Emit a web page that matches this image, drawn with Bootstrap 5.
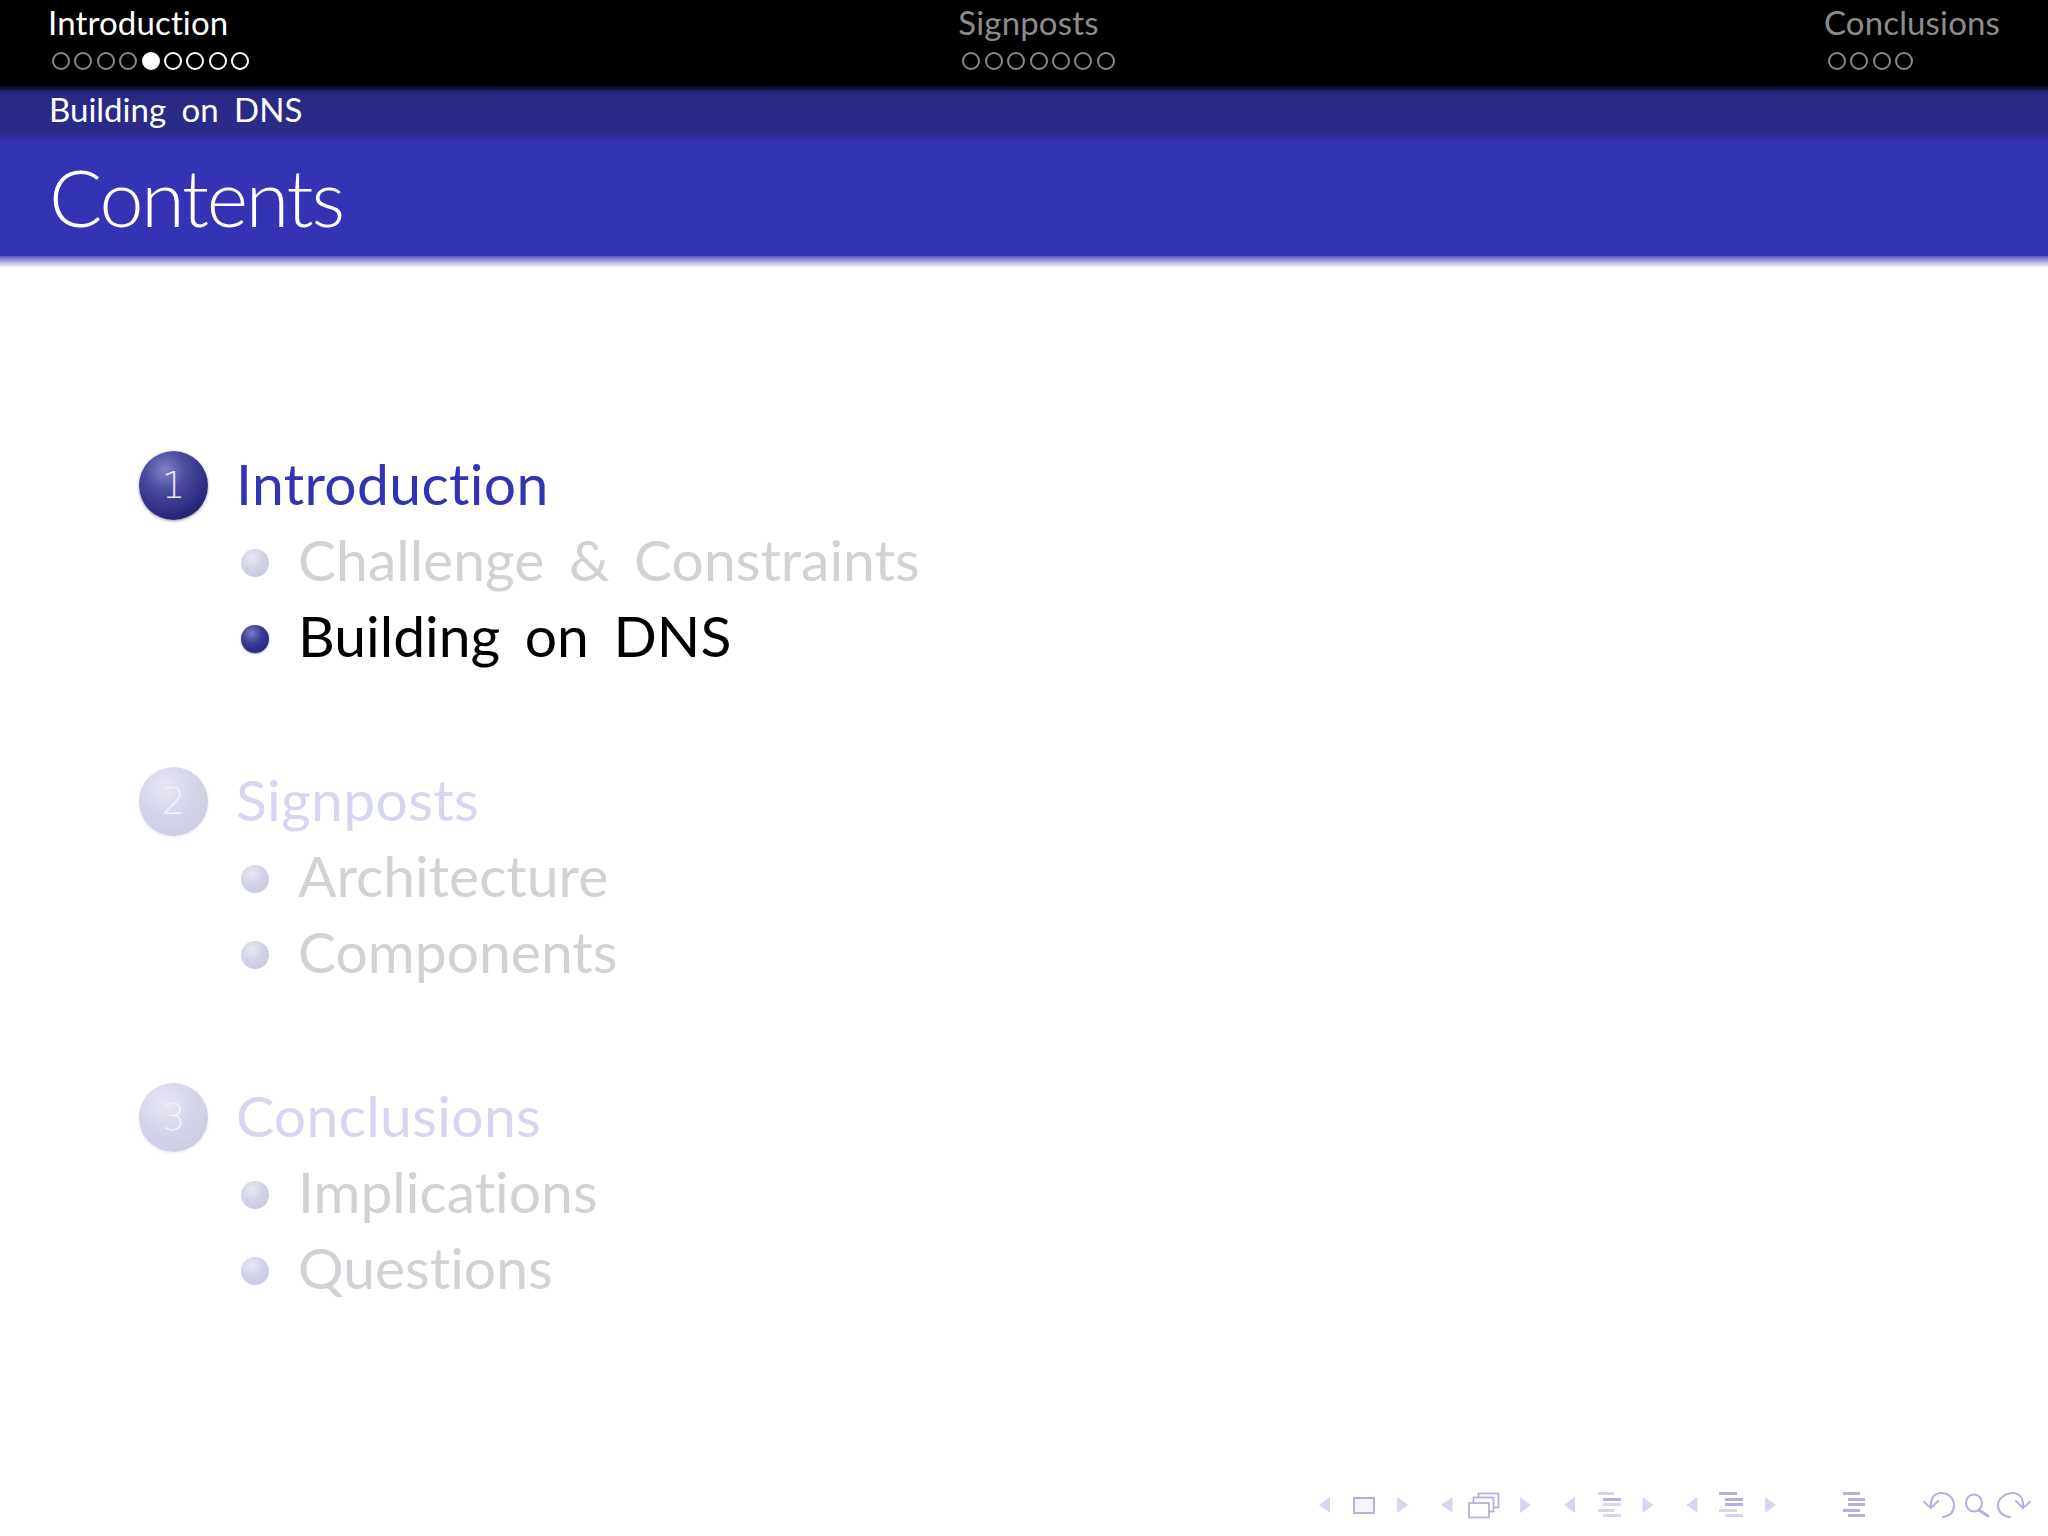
<!DOCTYPE html>
<html lang="en"><head><meta charset="utf-8"><title>Contents</title>
<link href="https://cdn.jsdelivr.net/npm/bootstrap@5.3.0/dist/css/bootstrap.min.css" rel="stylesheet">
<style>
html,body{margin:0;height:100%}
body{width:2048px;height:1536px;overflow:hidden;background:#fff;font-family:Lato,"Open Sans","Liberation Sans",sans-serif;font-weight:400;color:#000;font-variant-ligatures:none;font-kerning:normal}
.slide{width:2048px;height:1536px}
.topnav{height:85px;background:#000;padding:0 48px 0 48px}
.navname{font-size:33px;line-height:38px;padding-top:3px;color:#8c8c8c;white-space:nowrap;letter-spacing:.15px}
.navname.on{color:#fff}
.dots{gap:4.4px;margin:11px 0 0 4px}
.dotm{width:18px;height:18px;border:2px solid #8a8a8a;border-radius:50%}
.dotm.on{border-color:#fff}
.dotm.fill{background:#fff;border-color:#fff}
.subbar{height:58px;background:linear-gradient(#000 0,#25257c 7px,#2a2a85 14px,#2a2a88 47px,#3333b3 57px);padding:4px 49px 0;color:#fff;font-size:33px;line-height:40px;word-spacing:7px}
.titlebar{height:115px;background:#3333b3;color:#fff;font-size:79px;font-weight:300;letter-spacing:-2.2px;line-height:112px;padding:0 49px;margin-top:-2px}
.fadebar{height:12px;background:linear-gradient(#5a5ac2,#c5c5ea 60%,#fff)}
.toc{padding:178px 0 0 139px}
.tocsec{margin-bottom:88px}
.secrow{height:76px}
.ballbig{width:69px;height:69px;border-radius:50%;font-family:"DejaVu Sans",sans-serif;font-weight:200;font-size:37px;line-height:1;color:#e8e8f8;background:radial-gradient(circle at 38% 28%,#8282c8 0,#4a4a9e 32%,#2a2a80 68%,#181858 100%);box-shadow:0 1px 3px rgba(20,20,60,.45);margin:2px 28px 0 0}
.secname{font-size:57px;color:#3333b3;letter-spacing:.35px}
.subrow{height:76px;padding-left:102px}
.ballsm{width:28px;height:28px;border-radius:50%;background:radial-gradient(circle at 38% 30%,#7a7ac8 0,#3a3a9a 40%,#1c1c6c 100%);margin:6px 29px 0 0;box-shadow:0 1px 2px rgba(20,20,60,.4)}
.subname{font-size:57px;color:#000;word-spacing:10px}
.dim .ballbig{background:radial-gradient(circle at 38% 30%,#e6e6f3 0,#d5d5ea 45%,#c7c7e0 100%);box-shadow:0 1px 3px rgba(20,20,60,.1);color:#f0f0f8}
.dim .secname{color:#d6d6f0}
.dimsub .ballsm{background:radial-gradient(circle at 38% 30%,#e8e8f3 0,#d0d0e6 50%,#c4c4dc 100%);box-shadow:none}
.dimsub .subname{color:#d2d2d6}
.navfoot{margin-top:auto;align-self:flex-end;flex:none}
</style></head><body>
<div class="slide d-flex flex-column">
 <nav class="topnav d-flex justify-content-between">
  <div><div class="navname on">Introduction</div><div class="dots d-flex">
   <span class="dotm"></span><span class="dotm"></span><span class="dotm"></span><span class="dotm"></span><span class="dotm fill"></span><span class="dotm on"></span><span class="dotm on"></span><span class="dotm on"></span><span class="dotm on"></span></div></div>
  <div><div class="navname">Signposts</div><div class="dots d-flex">
   <span class="dotm"></span><span class="dotm"></span><span class="dotm"></span><span class="dotm"></span><span class="dotm"></span><span class="dotm"></span><span class="dotm"></span></div></div>
  <div><div class="navname">Conclusions</div><div class="dots d-flex">
   <span class="dotm"></span><span class="dotm"></span><span class="dotm"></span><span class="dotm"></span></div></div>
 </nav>
 <div class="subbar">Building on DNS</div>
 <div class="titlebar">Contents</div>
 <div class="fadebar"></div>
 <div class="toc">
  <section class="tocsec">
   <div class="secrow d-flex align-items-center"><span class="ballbig d-flex align-items-center justify-content-center">1</span><span class="secname">Introduction</span></div>
   <div class="subrow dimsub d-flex align-items-center"><span class="ballsm"></span><span class="subname">Challenge &amp; Constraints</span></div>
   <div class="subrow d-flex align-items-center"><span class="ballsm"></span><span class="subname">Building on DNS</span></div>
  </section>
  <section class="tocsec dim">
   <div class="secrow d-flex align-items-center"><span class="ballbig d-flex align-items-center justify-content-center">2</span><span class="secname">Signposts</span></div>
   <div class="subrow dimsub d-flex align-items-center"><span class="ballsm"></span><span class="subname">Architecture</span></div>
   <div class="subrow dimsub d-flex align-items-center"><span class="ballsm"></span><span class="subname">Components</span></div>
  </section>
  <section class="tocsec dim">
   <div class="secrow d-flex align-items-center"><span class="ballbig d-flex align-items-center justify-content-center">3</span><span class="secname">Conclusions</span></div>
   <div class="subrow dimsub d-flex align-items-center"><span class="ballsm"></span><span class="subname">Implications</span></div>
   <div class="subrow dimsub d-flex align-items-center"><span class="ballsm"></span><span class="subname">Questions</span></div>
  </section>
 </div>
 <svg class="navfoot" width="758" height="66" viewBox="0 0 758 66" fill="none">
  <g fill="#d8d6ee">
   <path d="M40 27V43L29 35Z"/><path d="M107 27V43L118.500 35Z"/>
   <path d="M162.500 27V43L151 35Z"/><path d="M230 27V43L241 35Z"/>
   <path d="M285 27V43L274 35Z"/><path d="M352.500 27V43L363.500 35Z"/>
   <path d="M407.500 27V43L396.500 35Z"/><path d="M475 27V43L486 35Z"/>
  </g>
  <rect x="64" y="28" width="20" height="15" stroke="#b5b0dc" stroke-width="2" fill="#f6f6fc"/>
  <g stroke="#b5b0dc" stroke-width="1.800" fill="#fff">
   <rect x="188.500" y="23.500" width="20" height="14"/><rect x="183.500" y="27.500" width="20" height="14"/><rect x="179" y="33" width="20" height="14.500"/>
  </g>
  <g fill="#d8d6ee">
   <rect x="308" y="22" width="16" height="3"/><rect x="313" y="28" width="18" height="3" fill="#b5b0dc"/><rect x="313" y="33" width="18" height="3"/><rect x="308" y="39" width="16" height="3"/><rect x="313" y="44" width="18" height="3"/>
  </g>
  <g fill="#d8d6ee">
   <rect x="429" y="22" width="18" height="3" fill="#b5b0dc"/><rect x="435" y="28" width="18" height="3" fill="#b5b0dc"/><rect x="435" y="33" width="18" height="3" fill="#b5b0dc"/><rect x="429" y="39" width="18" height="3"/><rect x="435" y="44" width="18" height="3"/>
  </g>
  <g fill="#b5b0dc">
   <rect x="553" y="22" width="17" height="3"/><rect x="558" y="28" width="17" height="3"/><rect x="558" y="33" width="17" height="3"/><rect x="553" y="39" width="17" height="3"/><rect x="558" y="44" width="17" height="3"/>
  </g>
  <g stroke="#b5b0dc" stroke-width="2" stroke-linecap="round">
   <path d="M641 38C640 29 644 23 651 23C659 23 664 29 664 35C664 42 660 46 653 47"/><path d="M634 32L641 38L648 31"/>
   <ellipse cx="684" cy="33" rx="8" ry="8.500"/><path d="M689 40L698 46" stroke-width="3"/>
   <path d="M733 38C734 29 730 23 723 23C715 23 708 29 708 35C708 42 713 46 720 47"/><path d="M726 31L733 38L740 32"/>
  </g>
 </svg>
</div>
</body></html>
